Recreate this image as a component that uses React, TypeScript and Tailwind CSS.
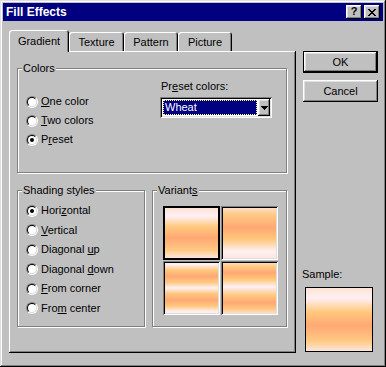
import type { ReactNode } from 'react'

const RAISED =
  'shadow-[inset_-1px_-1px_#000,inset_1px_1px_#fff,inset_-2px_-2px_#808080,inset_2px_2px_#dfdfdf]'
const SUNKEN =
  'shadow-[inset_1px_1px_#808080,inset_-1px_-1px_#fff,inset_2px_2px_#000,inset_-2px_-2px_#dfdfdf]'

const WHEAT =
  'bg-[linear-gradient(180deg,#fbe4d5_0%,#fff0f5_16%,#ffc87c_38%,#ffa873_60%,#ffc983_84%,#fde6dd_100%)]'
const WHEAT_REV =
  'bg-[linear-gradient(180deg,#fde6dd_0%,#ffc983_16%,#ffa873_40%,#ffc87c_62%,#fff0f5_84%,#fbe4d5_100%)]'
const WHEAT_MIRROR =
  'bg-[linear-gradient(180deg,#fbe4d5_0%,#fff0f5_6%,#ffc87c_17%,#ffa873_28%,#ffc983_40%,#fff0f5_50%,#ffc983_60%,#ffa873_72%,#ffc87c_83%,#fff0f5_94%,#fbe4d5_100%)]'
const WHEAT_MIRROR2 =
  'bg-[linear-gradient(180deg,#fde6dd_0%,#ffc983_10%,#ffa873_22%,#ffc87c_34%,#fff0f5_48%,#fbe4d5_52%,#ffc87c_64%,#ffa873_77%,#ffc983_89%,#fde6dd_100%)]'

function Radio({ checked }: { checked?: boolean }) {
  return (
    <span className="w-[12px] h-[12px] shrink-0 rounded-full border border-t-[#808080] border-l-[#808080] border-b-white border-r-white">
      <span className="w-full h-full rounded-full bg-white border border-t-black border-l-black border-b-[#dfdfdf] border-r-[#dfdfdf] flex items-center justify-center">
        {checked && <span className="w-[4px] h-[4px] rounded-full bg-black" />}
      </span>
    </span>
  )
}

function RadioRow({ label, checked, h = 'h-[19px]' }: { label: ReactNode; checked?: boolean; h?: string }) {
  return (
    <div className={`flex items-center gap-[3px] ${h}`}>
      <Radio checked={checked} />
      <span className="leading-[13px]">{label}</span>
    </div>
  )
}

function Group({ title, className, children }: { title: ReactNode; className: string; children: ReactNode }) {
  return (
    <div className={`relative border border-[#808080] shadow-[inset_1px_1px_#fff,1px_1px_#fff] ${className}`}>
      <span className="absolute left-[4px] top-[-7px] px-[1px] bg-[#c0c0c0] leading-[13px]">{title}</span>
      {children}
    </div>
  )
}

export default function App() {
  return (
    <div className="w-[386px] h-[367px] bg-[#c0c0c0] p-[3px] text-[11px] text-black [font-family:'Liberation_Sans',Arial,sans-serif] shadow-[inset_-1px_-1px_#000,inset_1px_1px_#dfdfdf,inset_-2px_-2px_#808080,inset_2px_2px_#fff]">
      {/* title bar */}
      <div className="h-[18px] bg-[#000080] flex items-center pl-[3px] pr-[3px]">
        <span className="text-white font-bold text-[12px] leading-none">Fill Effects</span>
        <div className={`ml-auto w-[16px] h-[14px] bg-[#c0c0c0] ${RAISED} flex items-center justify-center font-bold text-[11px] leading-none pb-[1px]`}>
          ?
        </div>
        <div className={`ml-[2px] w-[16px] h-[14px] bg-[#c0c0c0] ${RAISED} flex items-center justify-center`}>
          <svg width="8" height="7" viewBox="0 0 8 7" shapeRendering="crispEdges">
            <path
              d="M0 0h2v1h-2zM6 0h2v1h-2zM1 1h2v1h-2zM5 1h2v1h-2zM2 2h4v1h-4zM3 3h2v1h-2zM2 4h4v1h-4zM1 5h2v1h-2zM5 5h2v1h-2zM0 6h2v1h-2zM6 6h2v1h-2z"
              fill="#000"
            />
          </svg>
        </div>
      </div>

      <div className="flex mt-[9px] ml-[6px]">
        {/* tabs + panel */}
        <div className="w-[287px]">
          <div className="flex items-end h-[21px]">
            <div className="w-[60px] h-[22px] -mb-[1px] relative z-10 bg-[#c0c0c0] rounded-t-[3px] shadow-[inset_1px_1px_#fff,inset_-1px_0_#000,inset_-2px_0_#808080] flex justify-center pt-[5px] leading-[13px]">
              Gradient
            </div>
            <div className="w-[55px] h-[19px] rounded-t-[3px] shadow-[inset_1px_1px_#fff,inset_-1px_0_#000,inset_-2px_0_#808080] flex justify-center pt-[4px] leading-[13px]">
              Texture
            </div>
            <div className="w-[54px] h-[19px] rounded-t-[3px] shadow-[inset_1px_1px_#fff,inset_-1px_0_#000,inset_-2px_0_#808080] flex justify-center pt-[4px] leading-[13px]">
              Pattern
            </div>
            <div className="w-[54px] h-[19px] rounded-t-[3px] shadow-[inset_1px_1px_#fff,inset_-1px_0_#000,inset_-2px_0_#808080] flex justify-center pt-[4px] leading-[13px]">
              Picture
            </div>
          </div>

          <div className="h-[302px] pt-[17px] pl-[8px] pr-[9px] shadow-[inset_-1px_-1px_#000,inset_1px_1px_#fff,inset_-2px_-2px_#808080]">
            <Group title="Colors" className="h-[105px] flex">
              <div className="w-[142px] pl-[8px] pt-[23px]">
                <RadioRow label={<><u>O</u>ne color</>} />
                <RadioRow label={<><u>T</u>wo colors</>} />
                <RadioRow label={<>P<u>r</u>eset</>} checked />
              </div>
              <div className="pt-[11px]">
                <div className="leading-[13px] pl-[1px]">
                  Pr<u>e</u>set colors:
                </div>
                <div className={`mt-[4px] w-[112px] h-[21px] p-[2px] bg-white ${SUNKEN} flex`}>
                  <div className="flex-1 p-[1px]">
                    <div className="h-full bg-[#000080] text-white border border-dotted border-[#ffff80] leading-[13px] pl-[1px]">
                      Wheat
                    </div>
                  </div>
                  <div className={`w-[12px] h-full bg-[#c0c0c0] ${RAISED} flex items-center justify-center`}>
                    <svg width="7" height="4" viewBox="0 0 7 4" shapeRendering="crispEdges">
                      <path d="M0 0h7v1h-7zM1 1h5v1h-5zM2 2h3v1h-3zM3 3h1v1h-1z" fill="#000" />
                    </svg>
                  </div>
                </div>
              </div>
            </Group>

            <div className="flex mt-[17px]">
              <Group title="Shading styles" className="w-[128px] h-[137px] pl-[8px] pt-[10px]">
                <RadioRow h="h-[19.5px]" label={<>Hori<u>z</u>ontal</>} checked />
                <RadioRow h="h-[19.5px]" label={<><u>V</u>ertical</>} />
                <RadioRow h="h-[19.5px]" label={<>Diagonal <u>u</u>p</>} />
                <RadioRow h="h-[19.5px]" label={<>Diagonal <u>d</u>own</>} />
                <RadioRow h="h-[19.5px]" label={<><u>F</u>rom corner</>} />
                <RadioRow h="h-[19.5px]" label={<>Fro<u>m</u> center</>} />
              </Group>
              <Group title={<>Variant<u>s</u></>} className="ml-[7px] w-[135px] h-[137px] pl-[10px] pt-[15px]">
                <div className="grid grid-cols-[57px_57px] grid-rows-[54px_54px] gap-[1px]">
                  <div className={`${WHEAT} border-2 border-black`} />
                  <div className={`${WHEAT_REV} ${SUNKEN}`} />
                  <div className={`${WHEAT_MIRROR} ${SUNKEN}`} />
                  <div className={`${WHEAT_MIRROR2} ${SUNKEN}`} />
                </div>
              </Group>
            </div>
          </div>
        </div>

        {/* buttons + sample */}
        <div className="ml-[7px] pt-[21px] flex flex-col">
          <div className="w-[75px] h-[22px] border border-black">
            <div className={`h-full ${RAISED} flex items-center justify-center leading-[13px]`}>OK</div>
          </div>
          <div className={`mt-[7px] w-[75px] h-[22px] ${RAISED} flex items-center justify-center leading-[13px]`}>
            Cancel
          </div>
          <div className="mt-auto mb-[1px]">
            <div className="leading-[13px] mb-[6px] -ml-[1px]">Sample:</div>
            <div className={`ml-[2px] w-[68px] h-[65px] border border-black ${WHEAT}`} />
          </div>
        </div>
      </div>
    </div>
  )
}
